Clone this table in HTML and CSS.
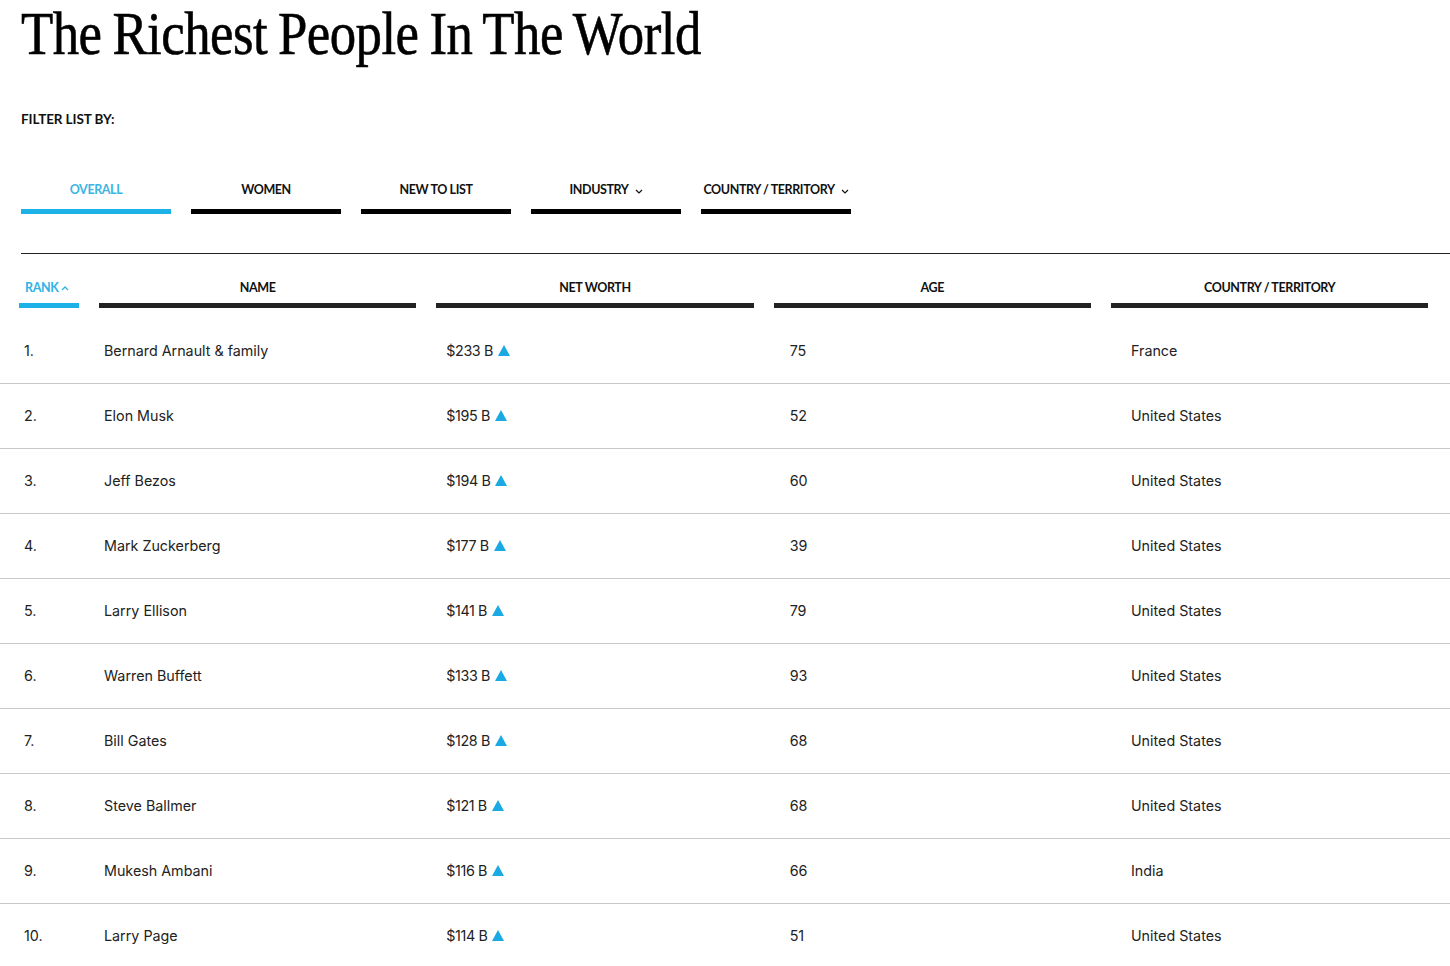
FILE: index.html
```html
<!DOCTYPE html>
<html lang="en">
<head>
<meta charset="utf-8">
<title>The Richest People In The World</title>
<link rel="stylesheet" href="styles.css">
</head>
<body>
<div class="page">
  <h1 class="title">The Richest People In The World</h1>
  <div class="filter-label">FILTER LIST BY:</div>
  <nav class="tabs">
    <div class="tab active"><span class="tab-label">OVERALL</span></div>
    <div class="tab"><span class="tab-label">WOMEN</span></div>
    <div class="tab"><span class="tab-label">NEW TO LIST</span></div>
    <div class="tab"><span class="tab-label">INDUSTRY <svg class="chev" width="8" height="5" viewBox="0 0 8 5"><path d="M1 1l3 3 3-3" fill="none" stroke="#111" stroke-width="1.2"/></svg></span></div>
    <div class="tab"><span class="tab-label">COUNTRY / TERRITORY <svg class="chev" width="8" height="5" viewBox="0 0 8 5"><path d="M1 1l3 3 3-3" fill="none" stroke="#111" stroke-width="1.2"/></svg></span></div>
  </nav>
  <div class="divider"></div>
</div>

<div class="table">
  <div class="thead">
    <div class="th rank-th active"><span class="th-label">RANK <svg class="chev-up" width="8" height="5" viewBox="0 0 8 5"><path d="M1 4l3-3 3 3" fill="none" stroke="#2fb3e5" stroke-width="1.3"/></svg></span></div>
    <div class="th"><span class="th-label">NAME</span></div>
    <div class="th"><span class="th-label">NET WORTH</span></div>
    <div class="th"><span class="th-label">AGE</span></div>
    <div class="th"><span class="th-label">COUNTRY / TERRITORY</span></div>
  </div>

  <div class="row"><div class="c-rank">1.</div><div class="c-name">Bernard Arnault &amp; family</div><div class="c-worth">$233 B <span class="up"></span></div><div class="c-age">75</div><div class="c-country">France</div></div>
  <div class="row"><div class="c-rank">2.</div><div class="c-name">Elon Musk</div><div class="c-worth">$195 B <span class="up"></span></div><div class="c-age">52</div><div class="c-country">United States</div></div>
  <div class="row"><div class="c-rank">3.</div><div class="c-name">Jeff Bezos</div><div class="c-worth">$194 B <span class="up"></span></div><div class="c-age">60</div><div class="c-country">United States</div></div>
  <div class="row"><div class="c-rank">4.</div><div class="c-name">Mark Zuckerberg</div><div class="c-worth">$177 B <span class="up"></span></div><div class="c-age">39</div><div class="c-country">United States</div></div>
  <div class="row"><div class="c-rank">5.</div><div class="c-name">Larry Ellison</div><div class="c-worth">$141 B <span class="up"></span></div><div class="c-age">79</div><div class="c-country">United States</div></div>
  <div class="row"><div class="c-rank">6.</div><div class="c-name">Warren Buffett</div><div class="c-worth">$133 B <span class="up"></span></div><div class="c-age">93</div><div class="c-country">United States</div></div>
  <div class="row"><div class="c-rank">7.</div><div class="c-name">Bill Gates</div><div class="c-worth">$128 B <span class="up"></span></div><div class="c-age">68</div><div class="c-country">United States</div></div>
  <div class="row"><div class="c-rank">8.</div><div class="c-name">Steve Ballmer</div><div class="c-worth">$121 B <span class="up"></span></div><div class="c-age">68</div><div class="c-country">United States</div></div>
  <div class="row"><div class="c-rank">9.</div><div class="c-name">Mukesh Ambani</div><div class="c-worth">$116 B <span class="up"></span></div><div class="c-age">66</div><div class="c-country">India</div></div>
  <div class="row"><div class="c-rank">10.</div><div class="c-name">Larry Page</div><div class="c-worth">$114 B <span class="up"></span></div><div class="c-age">51</div><div class="c-country">United States</div></div>
</div>
</body>
</html>
```

FILE: styles.css
```css
html, body {
  margin: 0;
  padding: 0;
  background: #fff;
  overflow: hidden;
}

body {
  font-family: "Lato", "Liberation Sans", sans-serif;
  color: #111;
}

.page {
  padding-left: 21px;
}

.title {
  margin: 0;
  padding-top: 3px;
  font-family: "Liberation Serif", serif;
  font-weight: normal;
  font-size: 61px;
  line-height: 61px;
  letter-spacing: -0.6px;
  word-spacing: -2px;
  color: #000;
  -webkit-text-stroke: 0.6px #000;
  white-space: nowrap;
  transform: scaleX(0.865);
  transform-origin: left top;
}

.filter-label {
  margin-top: 47px;
  font-size: 13.5px;
  line-height: 16px;
  font-weight: 700;
  letter-spacing: -0.1px;
  color: #111;
}

.tabs {
  display: flex;
  gap: 20px;
  margin-top: 56px;
}

.tab {
  width: 150px;
  display: flex;
  flex-direction: column;
  align-items: center;
}

.tab::after {
  content: "";
  display: block;
  width: 100%;
  height: 5px;
  margin-top: 12px;
  background: #000;
}

.tab.active::after {
  background: #1cb2e8;
}

.tab-label {
  font-size: 12.5px;
  line-height: 14px;
  font-weight: 700;
  letter-spacing: -0.4px;
  color: #111;
  display: flex;
  align-items: center;
  gap: 6px;
}

.tab.active .tab-label {
  color: #3ab5e4;
}

.chev {
  display: block;
  margin-top: 2px;
}

.divider {
  margin-top: 39px;
  height: 1px;
  background: #222;
}

.table {
  width: 100%;
}

.thead,
.row {
  display: grid;
  grid-template-columns: 60px repeat(4, 317.33px);
  column-gap: 20px;
  padding-left: 19px;
}

.thead {
  padding-top: 27px;
  padding-bottom: 11px;
}

.th {
  display: flex;
  flex-direction: column;
  align-items: center;
}

.th::after {
  content: "";
  display: block;
  width: 100%;
  height: 5px;
  margin-top: 8px;
  background: #222;
}

.th.active::after {
  background: #1cb2e8;
}

.th-label {
  font-size: 12.5px;
  line-height: 14px;
  font-weight: 700;
  letter-spacing: -0.4px;
  color: #111;
  display: flex;
  align-items: center;
  gap: 3px;
}

.rank-th .th-label {
  color: #2fb3e5;
  align-self: flex-start;
  padding-left: 6px;
}

.row {
  height: 64px;
  align-items: center;
  border-bottom: 1px solid #c9c9c9;
  font-family: "Inter", "Liberation Sans", sans-serif;
  font-size: 14.3px;
  color: #222;
  letter-spacing: 0;
}

.row > div {
  padding-bottom: 2px;
}

.c-rank { padding-left: 5px; }
.c-name { padding-left: 5px; }
.c-worth { padding-left: 10px; display: flex; align-items: center; gap: 5px; letter-spacing: -0.4px; }
.c-age { padding-left: 16px; }
.c-country { padding-left: 20px; }

.up {
  display: inline-block;
  width: 0;
  height: 0;
  border-left: 6px solid transparent;
  border-right: 6px solid transparent;
  border-bottom: 11px solid #1aa9e2;
  margin-top: 1px;
}
```
